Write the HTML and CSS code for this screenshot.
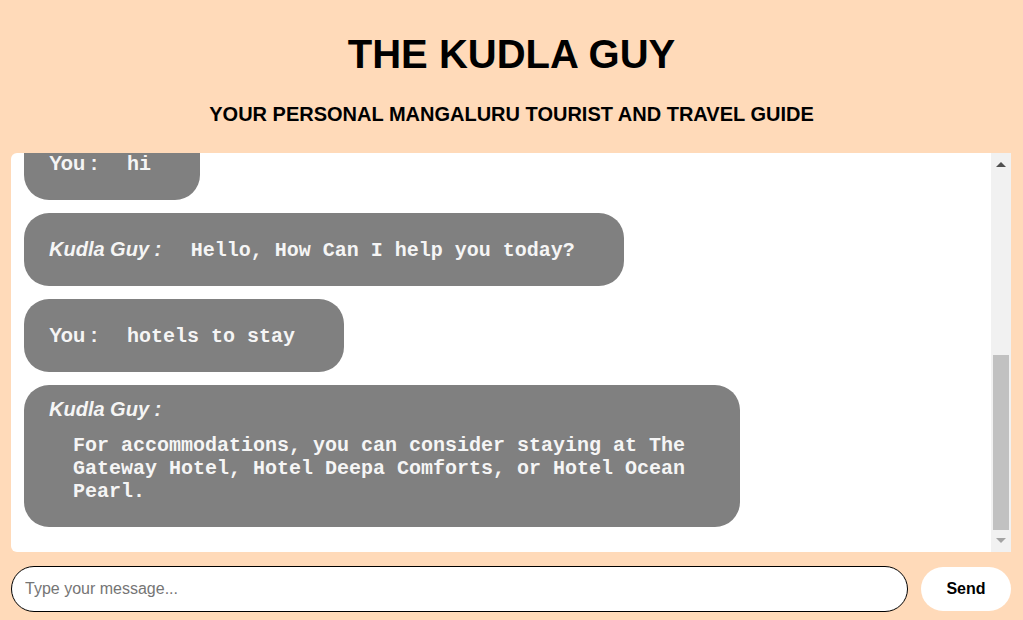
FILE: index.html
```html
<!DOCTYPE html>
<html lang="en">
<head>
<meta charset="utf-8">
<title>The Kudla Guy</title>
<link rel="stylesheet" href="styles.css">
</head>
<body>
<header class="header">
  <h1 class="title">THE KUDLA GUY</h1>
  <h2 class="subtitle">YOUR PERSONAL MANGALURU TOURIST AND TRAVEL GUIDE</h2>
</header>
<main class="chat">
  <div class="messages">
    <div class="chat-inner">
      <div class="bubble"><span class="label bot">Kudla Guy :</span> <span class="msg">Hello, How Can I help you today?</span></div>
      <div class="bubble"><span class="label">You :</span> <span class="msg">places to visit</span></div>
      <div class="bubble"><span class="label bot">Kudla Guy :</span> <span class="msg">Some popular places to visit in Mangaluru are Panambur Beach, Kadri Manjunath Temple and Pilikula Nisargadhama.</span></div>
      <div class="bubble"><span class="label">You :</span> <span class="msg">thanks</span></div>
      <div class="bubble"><span class="label">You :</span> <span class="msg">hi</span></div>
      <div class="bubble"><span class="label bot">Kudla Guy :</span> <span class="msg">Hello, How Can I help you today?</span></div>
      <div class="bubble"><span class="label">You :</span> <span class="msg">hotels to stay</span></div>
      <div class="bubble"><span class="label bot">Kudla Guy :</span> <span class="msg">For accommodations, you can consider staying at The Gateway Hotel, Hotel Deepa Comforts, or Hotel Ocean Pearl.</span></div>
    </div>
  </div>
  <div class="scrollbar" aria-hidden="true">
    <div class="sb-btn sb-up"><span class="tri tri-up"></span></div>
    <div class="sb-track"><div class="sb-thumb"></div></div>
    <div class="sb-btn sb-down"><span class="tri tri-down"></span></div>
  </div>
</main>
<form class="composer" onsubmit="return false">
  <input class="input" type="text" placeholder="Type your message...">
  <button class="send" type="submit">Send</button>
</form>
</body>
</html>
```
FILE: styles.css
```css
html, body {
  margin: 0;
  padding: 0;
}
body {
  background: #ffdab9;
  font-family: "Liberation Sans", Arial, sans-serif;
  color: #000;
}
.header {
  padding-top: 31px;
  text-align: center;
}
.title {
  margin: 0;
  font-size: 40px;
  line-height: 46px;
  font-weight: bold;
}
.subtitle {
  margin: 26px 0 0;
  font-size: 20px;
  line-height: 23px;
  font-weight: bold;
}
.chat {
  margin: 27px 0 0 11px;
  width: 1000px;
  height: 399px;
  background: #fff;
  border-radius: 6px 0 0 6px;
  display: flex;
  overflow: hidden;
}
.messages {
  flex: 1;
  min-width: 0;
  overflow-y: scroll;
  scrollbar-width: none;
  display: flex;
  flex-direction: column-reverse;
}
.messages::-webkit-scrollbar {
  display: none;
}
.chat-inner {
  padding: 13px 13px 12px;
}
.bubble {
  width: fit-content;
  max-width: 75%;
  box-sizing: border-box;
  background: #808080;
  border-radius: 25px;
  padding: 13px 25px 14px;
  margin-bottom: 13px;
  color: #f5f5f5;
  font-size: 20px;
  line-height: 23px;
}
.label {
  font-weight: bold;
  font-size: 20px;
}
.label.bot {
  font-style: italic;
}
.msg {
  display: inline-block;
  padding: 13px 24px 10px;
  font-family: "Liberation Mono", "Courier New", monospace;
  font-weight: bold;
  font-size: 20px;
  line-height: 23px;
}
.scrollbar {
  width: 20px;
  flex: none;
  background: #f1f1f1;
  display: flex;
  flex-direction: column;
}
.sb-btn {
  height: 20px;
  flex: none;
  display: flex;
  justify-content: center;
  box-sizing: border-box;
}
.sb-up {
  align-items: flex-start;
  padding-top: 9px;
}
.sb-down {
  align-items: flex-end;
  padding-bottom: 9px;
}
.tri {
  width: 0;
  height: 0;
  border-left: 5px solid transparent;
  border-right: 5px solid transparent;
}
.tri-up {
  border-bottom: 5px solid #505050;
}
.tri-down {
  border-top: 5px solid #a3a3a3;
}
.sb-track {
  flex: 1;
  padding: 0 2px;
}
.sb-thumb {
  margin-top: 182px;
  height: 175px;
  background: #c1c1c1;
}
.composer {
  display: flex;
  gap: 13px;
  margin: 14px 0 0 11px;
  width: 1000px;
}
.input {
  flex: 1;
  height: 46px;
  box-sizing: border-box;
  border: 1px solid #000;
  border-radius: 23px;
  padding: 0 13px;
  font-family: "Liberation Sans", Arial, sans-serif;
  font-size: 16px;
  background: #fff;
  outline: none;
}
.input::placeholder {
  color: #757575;
}
.send {
  width: 90px;
  height: 44px;
  margin-top: 1px;
  border: none;
  border-radius: 22px;
  background: #fff;
  font-family: "Liberation Sans", Arial, sans-serif;
  font-weight: bold;
  font-size: 16px;
  color: #000;
}
```
